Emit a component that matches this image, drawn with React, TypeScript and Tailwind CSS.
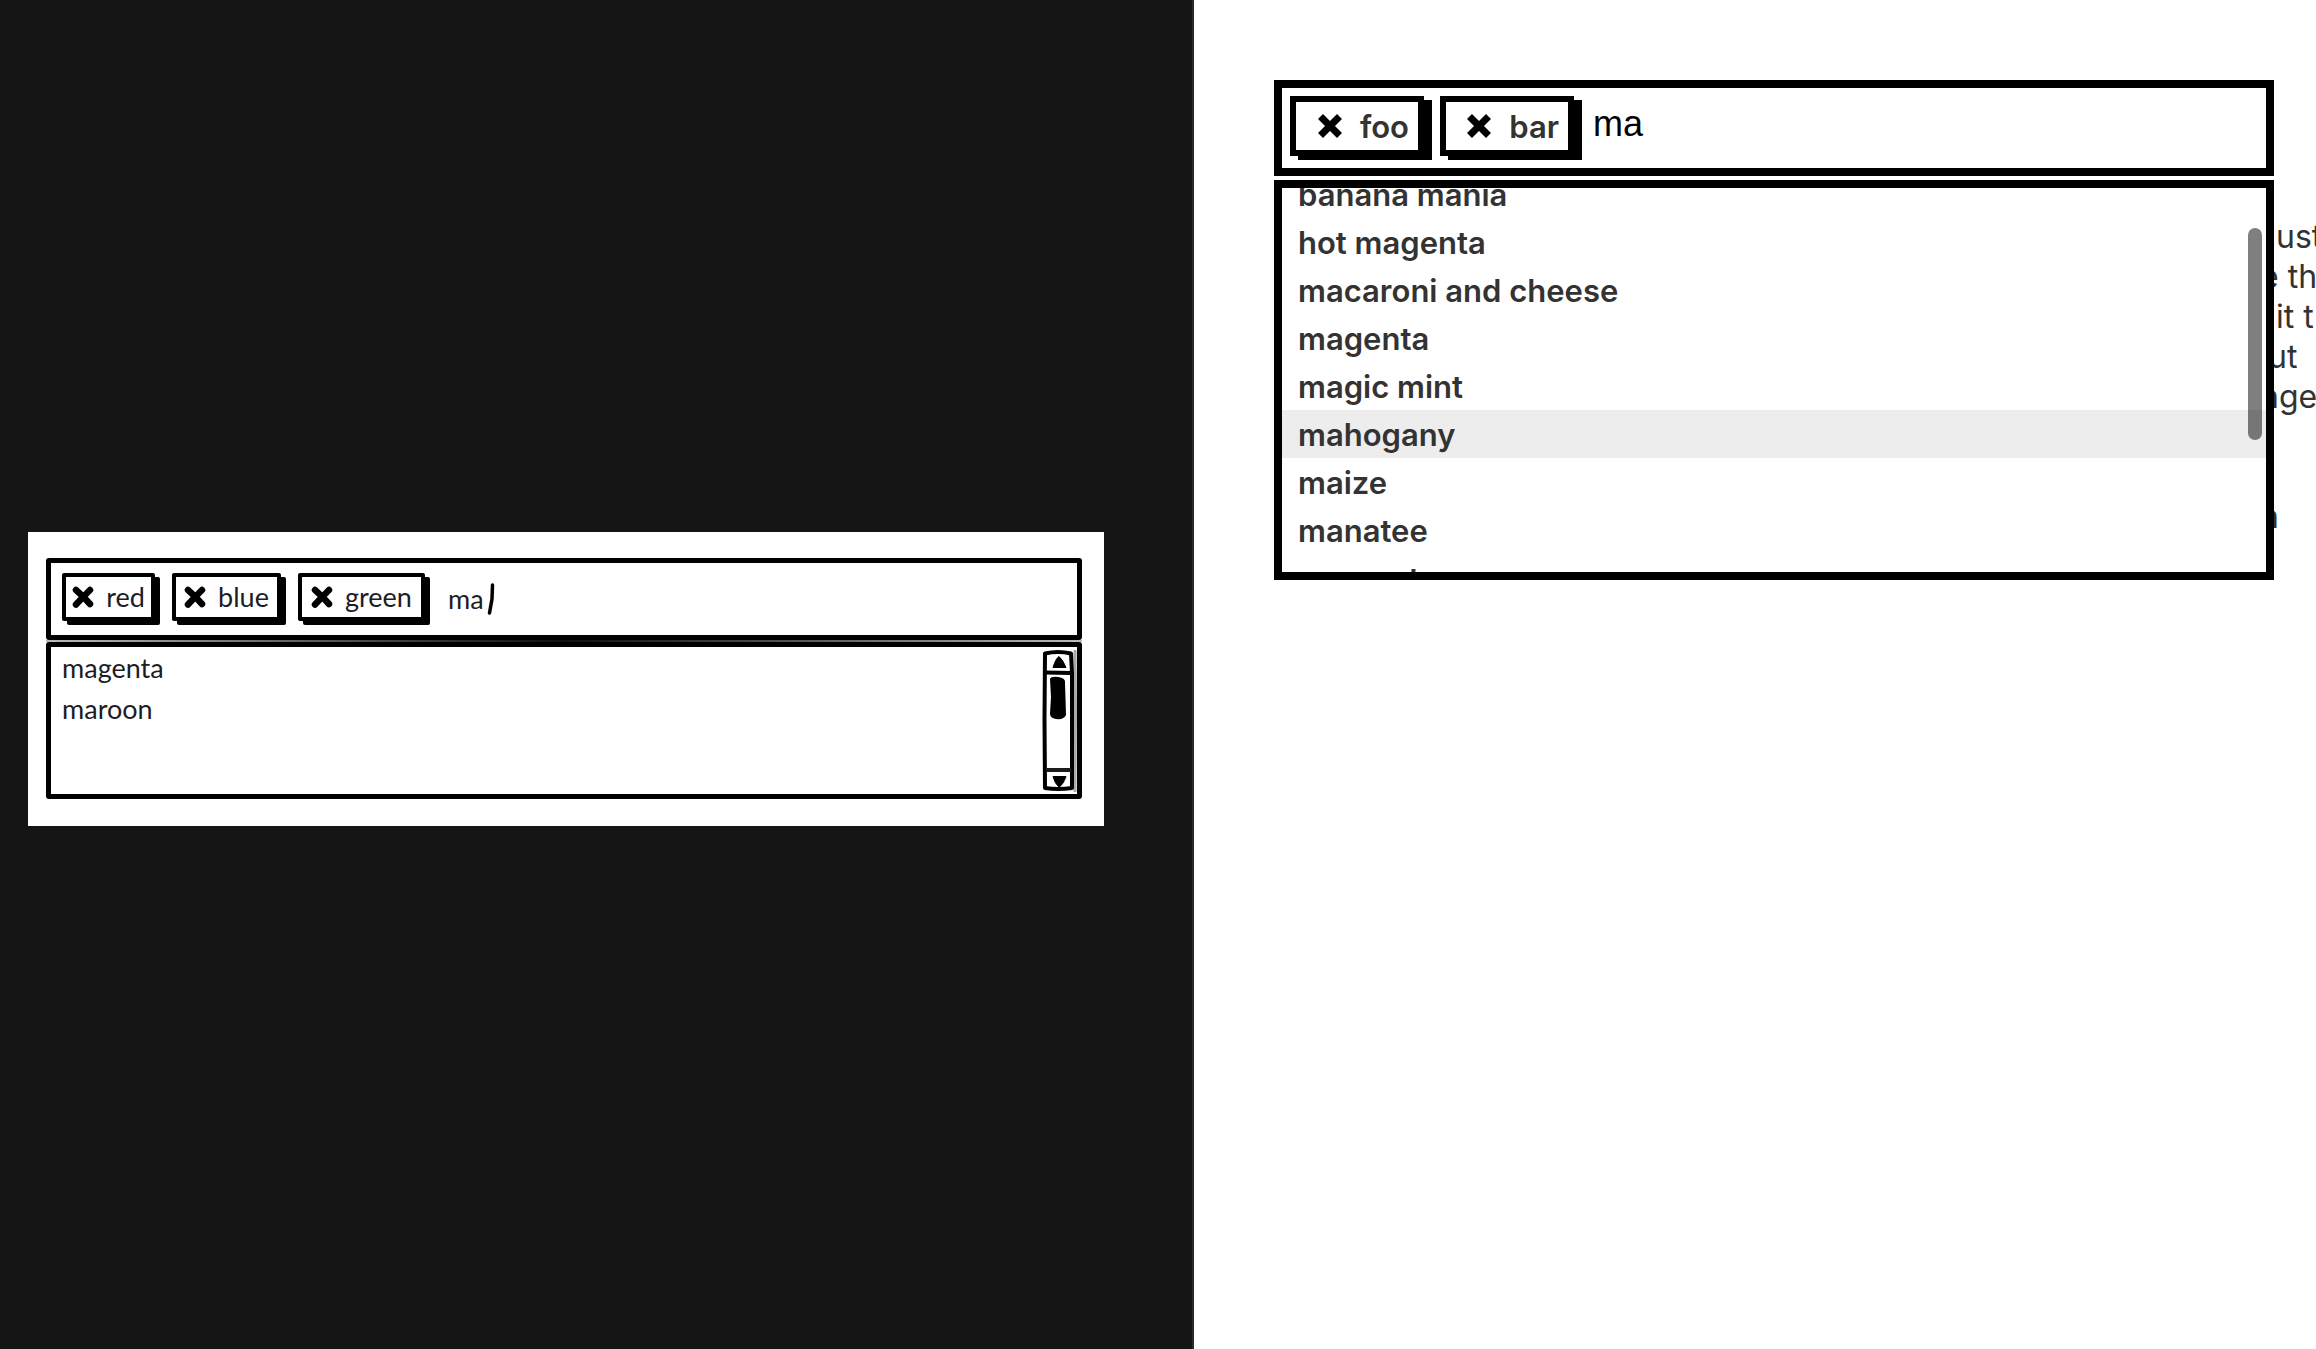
import React, { useState } from "react";

function Cross({ className }: { className: string }) {
  return (
    <svg viewBox="0 0 24 24" className={className} fill="none" aria-hidden="true">
      <path d="M2.500 2.500 L21.500 21.500 M21.500 2.500 L2.500 21.500" stroke="#000" strokeWidth="7" />
    </svg>
  );
}

function SketchCross() {
  return (
    <svg viewBox="0 0 22 22" className="size-[22px] shrink-0" fill="none" aria-hidden="true">
      <path d="M4 4 Q11 10 18 18 M18 4 Q11 11 4 18.500" stroke="#000" strokeWidth="6.500" strokeLinecap="round" />
    </svg>
  );
}

function SketchTag({ label, width }: { label: string; width: string }) {
  return (
    <button
      type="button"
      className={
        "flex h-12 shrink-0 items-center justify-center gap-3 rounded-[2px] border-4 border-black bg-white shadow-[5px_4px_0_#000] " +
        width
      }
    >
      <SketchCross />
      <span className="leading-8">{label}</span>
    </button>
  );
}

function SketchScrollbar() {
  return (
    <svg viewBox="0 0 36 144" className="h-[144px] w-9 shrink-0" fill="none" aria-hidden="true">
      <path d="M34 1 L34.500 60 L34 143" stroke="#a8a8a8" strokeWidth="3" />
      <path d="M4 4.500 Q17 1.500 30 4.500 L31 24 L31 139 Q17 141 4 139 L3.500 70 Z" stroke="#000" strokeWidth="4" strokeLinejoin="round" />
      <path d="M4 23.500 L30 24" stroke="#000" strokeWidth="4" />
      <path d="M5 121 L30 121" stroke="#1c1c1c" strokeWidth="4" />
      <path d="M12 18.500 Q15 9 18 7.500 Q22 11 25 18.500 Z" fill="#000" stroke="#000" />
      <path d="M12 127.500 L25 127.500 Q22 136 18 138 Q14 135 12 127.500 Z" fill="#000" stroke="#000" />
      <path d="M9 30 Q10 27 17 28 Q25 29 24 34 L25 66 Q23 71 15 70 Q9 69 9 65 L10 48 Z" fill="#000" />
    </svg>
  );
}

function Wireframe() {
  const [value, setValue] = useState("ma");
  return (
    <section className="w-full bg-white pt-[26px] pr-[22px] pb-[27px] pl-[18px] font-['Lato',sans-serif] text-[27px] text-[#1c1c24]">
      <div className="flex h-[82px] items-start rounded-[3px] border-[5px] border-black pt-[10px] pl-[11px]">
        <div className="flex gap-[17px]">
          <SketchTag label="red" width="w-[93px]" />
          <SketchTag label="blue" width="w-[109px]" />
          <SketchTag label="green" width="w-[127px]" />
        </div>
        <input
          aria-label="Wireframe colors"
          value={value}
          onChange={(e) => setValue(e.target.value)}
          className="ml-[23px] h-[50px] w-[39px] bg-transparent outline-none"
        />
        <svg viewBox="0 0 8 34" className="mt-2 h-[34px] w-2" fill="none" aria-hidden="true">
          <path d="M5.500 4 L5 18 L2.500 32" stroke="#000" strokeWidth="3.500" strokeLinecap="round" />
        </svg>
      </div>
      <div className="h-[2px] bg-linear-to-r from-[#bbb] via-[#111] to-[#bbb]" />
      <div className="flex h-[157px] items-center justify-between rounded-[3px] border-[5px] border-black">
        <ul className="self-stretch pl-[11px] leading-[41px]">
          <li>magenta</li>
          <li>maroon</li>
        </ul>
        <SketchScrollbar />
      </div>
    </section>
  );
}

function Tag({ label }: { label: string }) {
  return (
    <button
      type="button"
      className="flex h-[60px] w-[134px] shrink-0 items-center justify-end gap-[18px] border-[6px] border-black bg-white pr-[9px] text-[31px] leading-[48px] font-semibold shadow-[8px_4px_0_#000]"
    >
      <Cross className="size-6 shrink-0" />
      <span className="pt-[2px]">{label}</span>
    </button>
  );
}

const options = [
  "banana mania",
  "hot magenta",
  "macaroni and cheese",
  "magenta",
  "magic mint",
  "mahogany",
  "maize",
  "manatee",
  "mango tango",
];

function Combobox() {
  const [query, setQuery] = useState("ma");
  const [active, setActive] = useState("mahogany");
  return (
    <div className="relative z-10 mr-[42px] ml-20">
      <div className="flex h-24 items-start gap-4 border-8 border-black bg-white p-2">
        <Tag label="foo" />
        <Tag label="bar" />
        <input
          aria-label="Colors"
          value={query}
          onChange={(e) => setQuery(e.target.value)}
          className="h-14 min-w-0 flex-1 bg-transparent pl-[3px] font-['Liberation_Sans',sans-serif] text-[36px] text-black outline-none"
        />
      </div>
      <div className="relative mt-1 h-[400px] overflow-hidden border-8 border-black bg-white">
        <ul role="listbox" aria-label="Matching colors" className="-mt-[18px]">
          {options.map((name) => (
            <li
              key={name}
              role="option"
              aria-selected={name === active}
              onMouseEnter={() => setActive(name)}
              className={
                "h-12 px-4 pt-px text-[31px] leading-[48px] font-semibold " + (name === active ? "bg-[#ededed]" : "")
              }
            >
              {name}
            </li>
          ))}
        </ul>
        <div className="absolute top-10 right-1 h-[212px] w-[14px] rounded-full bg-black/50" />
      </div>
    </div>
  );
}

function Notes() {
  return (
    <div className="absolute top-[217px] right-0 w-14 overflow-hidden text-[32px] leading-10 whitespace-nowrap">
      <p>
        <span className="block pl-4">ust</span>
        <span className="block">e th</span>
        <span className="block pl-4">it t</span>
        <span className="block pl-2">ut</span>
        <span className="block">nge</span>
      </p>
      <p className="mt-20">n</p>
    </div>
  );
}

export default function App() {
  return (
    <div className="grid min-h-screen grid-cols-[1194fr_1122fr] bg-white">
      <aside className="flex items-center border-r-2 border-[#2b2b28] bg-[#151515] pt-[9px] pr-[88px] pl-7">
        <Wireframe />
      </aside>
      <main className="relative overflow-hidden pt-20 font-['Inter',sans-serif] text-[#333]">
        <Combobox />
        <Notes />
      </main>
    </div>
  );
}
